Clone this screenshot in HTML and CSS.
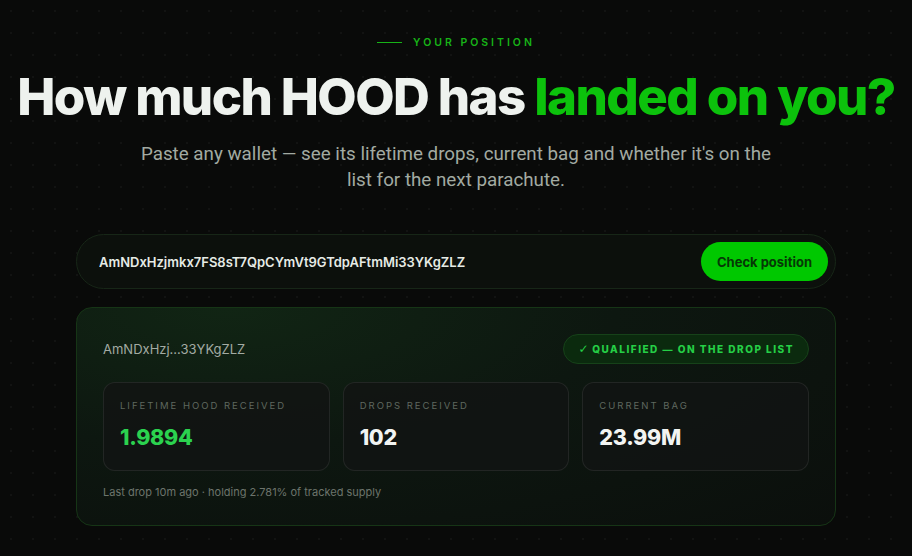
FILE: index.html
```html
<!DOCTYPE html>
<html lang="en">
<head>
  <meta charset="UTF-8" />
  <meta name="viewport" content="width=device-width, initial-scale=1.0"/>
  <title>HOOD Drops - Your Position</title>
  <link rel="stylesheet" href="styles.css">
</head>
<body>

  <section class="position">
    <div class="eyebrow"><span class="eyebrow-line"></span>YOUR POSITION</div>
    <h1>How much HOOD has <span class="accent">landed on you?</span></h1>
    <p class="lead">Paste any wallet — see its lifetime drops, current bag and whether it's on the list for the next parachute.</p>

    <form class="lookup">
      <input type="text" id="walletInput" value="AmNDxHzjmkx7FS8sT7QpCYmVt9GTdpAFtmMi33YKgZLZ" spellcheck="false">
      <button type="button" id="checkBtn">Check position</button>
    </form>

    <div class="result">
      <div class="result-head">
        <div class="wallet-short">AmNDxHzj...33YKgZLZ</div>
        <div class="badge"><span class="tick">✓</span> QUALIFIED — ON THE DROP LIST</div>
      </div>
      <div class="stats">
        <div class="stat">
          <div class="stat-label">LIFETIME HOOD RECEIVED</div>
          <div class="stat-value green">1.9894</div>
        </div>
        <div class="stat">
          <div class="stat-label">DROPS RECEIVED</div>
          <div class="stat-value">102</div>
        </div>
        <div class="stat">
          <div class="stat-label">CURRENT BAG</div>
          <div class="stat-value">23.99M</div>
        </div>
      </div>
      <div class="result-foot">Last drop 10m ago · holding 2.781% of tracked supply</div>
    </div>
  </section>

</body>
</html>
```

FILE: styles.css
```css
* {margin: 0; padding: 0; box-sizing: border-box;}
body {
  font-family: 'Inter', sans-serif;
  background-color: #090a09;
  background-image: radial-gradient(rgba(255,255,255,0.035) 1px, transparent 1.2px);
  background-size: 22px 22px;
  color: #eef1ee;
  min-height: 556px;
}

.position {
  max-width: 760px;
  margin: 0 auto;
  padding-top: 36px;
  text-align: center;
}

.eyebrow {
  display: flex;
  justify-content: center;
  align-items: center;
  gap: 11px;
  font-size: 10.5px;
  font-weight: 600;
  letter-spacing: 3px;
  color: #17b317;
}
.eyebrow-line {
  width: 25px;
  height: 1px;
  background: #17b317;
}

h1 {
  margin: 18px -80px 0;
  font-size: 51px;
  font-weight: 800;
  letter-spacing: -1.6px;
  line-height: 60px;
  color: #eef2ee;
}
h1 .accent {
  color: #0cc20c;
}

.lead {
  margin: 14px auto 0;
  max-width: 650px;
  font-family: 'Roboto', sans-serif;
  font-size: 18.8px;
  line-height: 26px;
  color: #a2aaa2;
}

.lookup {
  margin-top: 41px;
  height: 55px;
  display: flex;
  align-items: center;
  justify-content: space-between;
  padding: 0 7px 0 22px;
  background: #0c100c;
  border: 1px solid #172617;
  border-radius: 28px;
}
.lookup input {
  flex: 1;
  background: none;
  border: none;
  outline: none;
  font-family: 'Inter', sans-serif;
  font-size: 13px;
  font-weight: 600;
  color: #e6ebe6;
}
.lookup button {
  height: 39px;
  padding: 0 16px;
  border: none;
  border-radius: 20px;
  background: #00c800;
  color: #063806;
  font-family: 'Inter', sans-serif;
  font-size: 13px;
  font-weight: 700;
  cursor: pointer;
}

.result {
  margin-top: 18px;
  padding: 26px 26px 26px;
  text-align: left;
  border: 1px solid #163516;
  border-radius: 16px;
  background: radial-gradient(ellipse at 20% 0%, #112514 0%, #0d1710 45%, #0b0f0c 100%);
}

.result-head {
  display: flex;
  justify-content: space-between;
  align-items: center;
}
.wallet-short {
  font-size: 13px;
  color: #a3aba3;
}
.badge {
  padding: 7px 14px;
  border-radius: 16px;
  background: #0b2a0e;
  border: 1px solid #164219;
  color: #25cf46;
  font-size: 10px;
  font-weight: 800;
  letter-spacing: 1.5px;
}
.badge .tick {
  font-family: 'DejaVu Sans', sans-serif;
  font-size: 12px;
  font-weight: 400;
  letter-spacing: 0;
}

.stats {
  display: grid;
  grid-template-columns: repeat(3, 1fr);
  gap: 13px;
  margin-top: 18px;
}
.stat {
  height: 89px;
  padding: 17px 16px;
  border: 1px solid rgba(255,255,255,0.08);
  border-radius: 12px;
  background: rgba(18,20,19,0.85);
}
.stat-label {
  font-size: 9.5px;
  letter-spacing: 2px;
  color: #5f685f;
}
.stat-value {
  margin-top: 13px;
  font-size: 21.5px;
  font-weight: 800;
  letter-spacing: -0.3px;
  color: #f2f4f2;
}
.stat-value.green {
  color: #2bd24f;
}

.result-foot {
  margin-top: 14px;
  font-size: 11px;
  color: #6c746c;
}
```
